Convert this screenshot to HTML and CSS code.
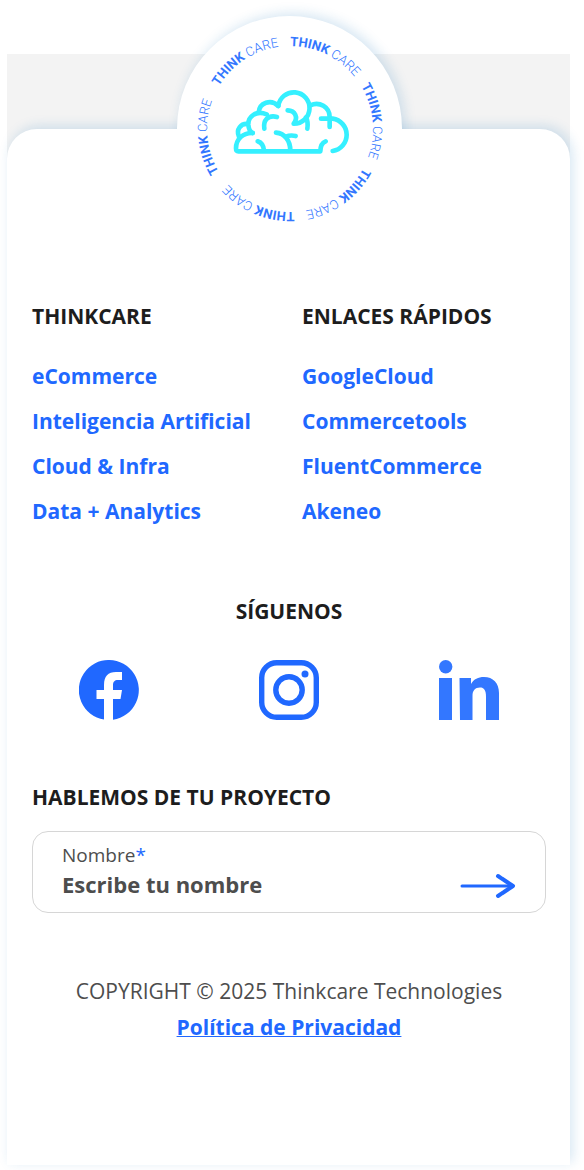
FILE: index.html
```html
<!DOCTYPE html>
<html lang="es">
<head>
    <meta charset="UTF-8">
    <meta name="viewport" content="width=device-width, initial-scale=1.0">
    <title>Thinkcare</title>
    <link rel="stylesheet" href="styles.css">
</head>
<body>
    <footer class="footer">
        <div class="footer-card">
            <!-- Round logo over the top edge of the card -->
            <a class="badge" href="#" aria-label="Thinkcare">
                <svg viewBox="0 0 225 225">
                    <defs>
                        <path id="ring" d="M113 30 A83 83 0 0 1 113 196 A83 83 0 0 1 113 30"/>
                    </defs>
                    <g class="ring-text">
                        <text><textPath href="#ring">THINK <tspan>CARE</tspan></textPath></text>
                        <text transform="rotate(59 113 113)"><textPath href="#ring">THINK <tspan>CARE</tspan></textPath></text>
                        <text transform="rotate(118 113 113)"><textPath href="#ring">THINK <tspan>CARE</tspan></textPath></text>
                        <text transform="rotate(177 113 113)"><textPath href="#ring">THINK <tspan>CARE</tspan></textPath></text>
                        <text transform="rotate(239 113 113)"><textPath href="#ring">THINK <tspan>CARE</tspan></textPath></text>
                        <text transform="rotate(301 113 113)"><textPath href="#ring">THINK <tspan>CARE</tspan></textPath></text>
                    </g>
                    <svg class="cloud" x="44" y="64" width="140" height="85" viewBox="0 0 420 255">
                        <path d="M172 78 A47 47 0 1 1 218 131 C233 112 222 92 200 91"/>
                        <path d="M172 78 C150 56 115 68 113 98"/>
                        <path d="M168 111 C140 104 126 122 130 146"/>
                        <path d="M137 103 C105 90 81 110 82 134 C83 148 86 155 95 159"/>
                        <path d="M80 132 C60 130 44 148 54 170"/>
                        <path d="M95 159 C65 158 45 178 45 205 Q45 214 52 214 H298 C298 200 304 188 314 184"/>
                        <path d="M110 184 C122 188 128 198 129 212"/>
                        <path d="M165 158 C190 160 208 180 208 212"/>
                        <path d="M195 170 Q208 164 224 168"/>
                        <path d="M255 112 C261 124 260 140 259 146"/>
                        <path d="M268 76 C295 64 326 80 326 112 V141"/>
                        <path d="M300 116 H335 A49 49 0 0 1 335 213"/>
                    </svg>
                </svg>
            </a>

            <div class="link-columns">
                <nav>
                    <h2>THINKCARE</h2>
                    <ul>
                        <li><a href="#">eCommerce</a></li>
                        <li><a href="#">Inteligencia Artificial</a></li>
                        <li><a href="#">Cloud &amp; Infra</a></li>
                        <li><a href="#">Data + Analytics</a></li>
                    </ul>
                </nav>
                <nav>
                    <h2>ENLACES RÁPIDOS</h2>
                    <ul>
                        <li><a href="#">GoogleCloud</a></li>
                        <li><a href="#">Commercetools</a></li>
                        <li><a href="#">FluentCommerce</a></li>
                        <li><a href="#">Akeneo</a></li>
                    </ul>
                </nav>
            </div>

            <section class="social">
                <h2>SÍGUENOS</h2>
                <div class="social-icons">
                    <a href="#" aria-label="Facebook">
                        <svg viewBox="0 0 60 60" fill="#2068ff">
                            <path d="M25 59.6 V39 H17.5 V30 H25 V25 C25 16 29 12 37 12 H43 V20 H39 C35.5 20 34 22 34 25 V30 H43 L41.5 39 H34 V59.7 A30 30 0 1 0 25 59.6 Z"/>
                        </svg>
                    </a>
                    <a href="#" aria-label="Instagram">
                        <svg viewBox="0 0 60 60" fill="none" stroke="#2068ff" stroke-width="5.4">
                            <rect x="2.7" y="2.7" width="54.6" height="54.6" rx="15"/>
                            <circle cx="30" cy="30" r="13.2"/>
                            <circle cx="46" cy="14" r="3.5" fill="#2068ff" stroke="none"/>
                        </svg>
                    </a>
                    <a href="#" aria-label="LinkedIn">
                        <svg viewBox="0 0 60 60" fill="#3377ff">
                            <circle cx="6.7" cy="6.7" r="6.7"/>
                            <path d="M0 18 H13 V60 H0 Z"/>
                            <path d="M20.5 18 H32 V24 C35 19 39 17 45 17 C54 17 60 23 60 33 V60 H47 V37 C47 30 45 27.5 41 27.5 C36 27.5 33.5 30.5 33.5 36 V60 H21 Z"/>
                        </svg>
                    </a>
                </div>
            </section>

            <form class="contact">
                <h2>HABLEMOS DE TU PROYECTO</h2>
                <div class="contact-box">
                    <div class="field">
                        <label for="nombre">Nombre<span>*</span></label>
                        <input type="text" id="nombre" placeholder="Escribe tu nombre">
                    </div>
                    <button type="button" aria-label="Enviar">
                        <svg viewBox="0 0 56 26">
                            <path d="M2 13 H53"/>
                            <path class="head" d="M38 3 L53 13 L38 23"/>
                        </svg>
                    </button>
                </div>
            </form>

            <div class="legal">
                <p>COPYRIGHT © 2025 Thinkcare Technologies</p>
                <a href="#">Política de Privacidad</a>
            </div>
        </div>
    </footer>
</body>
</html>
```

FILE: styles.css
```css
* {
    box-sizing: border-box;
    margin: 0;
    padding: 0;
}

body {
    font-family: 'Open Sans', 'Noto Sans', sans-serif;
    font-size: 21px;
    line-height: 30px;
    color: #4d4d4d;
    background-color: #fff;
}

h2 {
    font-size: 21px;
    line-height: 30px;
    font-weight: 700;
    color: #1d1d1d;
}

a {
    color: #2068ff;
    font-weight: 700;
    text-decoration: none;
}

svg {
    display: block;
}

/* Grey strip behind the top of the card */
.footer {
    margin: 54px 14px 0 7px;
    padding-top: 75px;
    background: linear-gradient(#f3f3f3, #f3f3f3) no-repeat top / 100% 105px;
}

.footer-card {
    position: relative;
    margin-bottom: 7px;
    padding: 172px 24px 120px 25px;
    background-color: #fff;
    border-radius: 30px 30px 0 0;
    box-shadow: 3px -3px 12px rgba(32, 120, 190, 0.18);
}

/* Logo */
.badge {
    position: absolute;
    top: -113px;
    left: 50%;
    width: 225px;
    height: 225px;
    margin-left: -112px;
}

.badge::before {
    content: "";
    position: absolute;
    inset: 0;
    border-radius: 50%;
    background-color: #fff;
    box-shadow: 3px -3px 12px rgba(32, 120, 190, 0.18);
    clip-path: inset(-30px -30px 112px -30px);
}

.badge > svg {
    position: relative;
    width: 100%;
}

.ring-text {
    font-family: Roboto, sans-serif;
    font-size: 13px;
    font-weight: 700;
    fill: #3377ff;
}

.ring-text tspan {
    font-weight: 300;
}

.cloud path {
    fill: none;
    stroke: #35f0ff;
    stroke-width: 14;
    stroke-linecap: round;
    stroke-linejoin: round;
}

/* Link lists */
.link-columns {
    display: grid;
    grid-template-columns: 1fr 1fr;
    gap: 26px;
}

.link-columns ul {
    display: grid;
    gap: 15px;
    margin-top: 30px;
    list-style: none;
}

/* Social networks */
.social {
    margin-top: 70px;
    text-align: center;
}

.social-icons {
    display: flex;
    justify-content: center;
    gap: 120px;
    margin-top: 34px;
}

.social-icons a {
    width: 60px;
    height: 60px;
}

/* Contact form */
.contact {
    margin-top: 62px;
}

.contact-box {
    display: flex;
    align-items: flex-end;
    justify-content: space-between;
    margin-top: 19px;
    padding: 9px 29px 13px;
    border: 1px solid #d6d6d6;
    border-radius: 16px;
}

.field {
    flex: 1;
}

.field label {
    display: block;
    font-size: 19px;
    line-height: 28px;
}

.field label span {
    color: #2068ff;
}

.field input {
    display: block;
    width: 100%;
    height: 30px;
    border: none;
    outline: none;
    background: none;
    font-family: inherit;
    font-size: 22px;
    font-weight: 700;
    color: #4d4d4d;
}

.field input::placeholder {
    color: #4d4d4d;
    opacity: 1;
}

.contact-box button {
    width: 56px;
    border: none;
    background: none;
    cursor: pointer;
}

.contact-box button path {
    fill: none;
    stroke: #2068ff;
    stroke-width: 3;
    stroke-linecap: round;
    stroke-linejoin: round;
}

.contact-box button .head {
    stroke-width: 4;
}

/* Legal */
.legal {
    margin-top: 60px;
    text-align: center;
    line-height: 36px;
}

.legal a {
    text-decoration: underline;
    text-decoration-thickness: 1px;
}
```
